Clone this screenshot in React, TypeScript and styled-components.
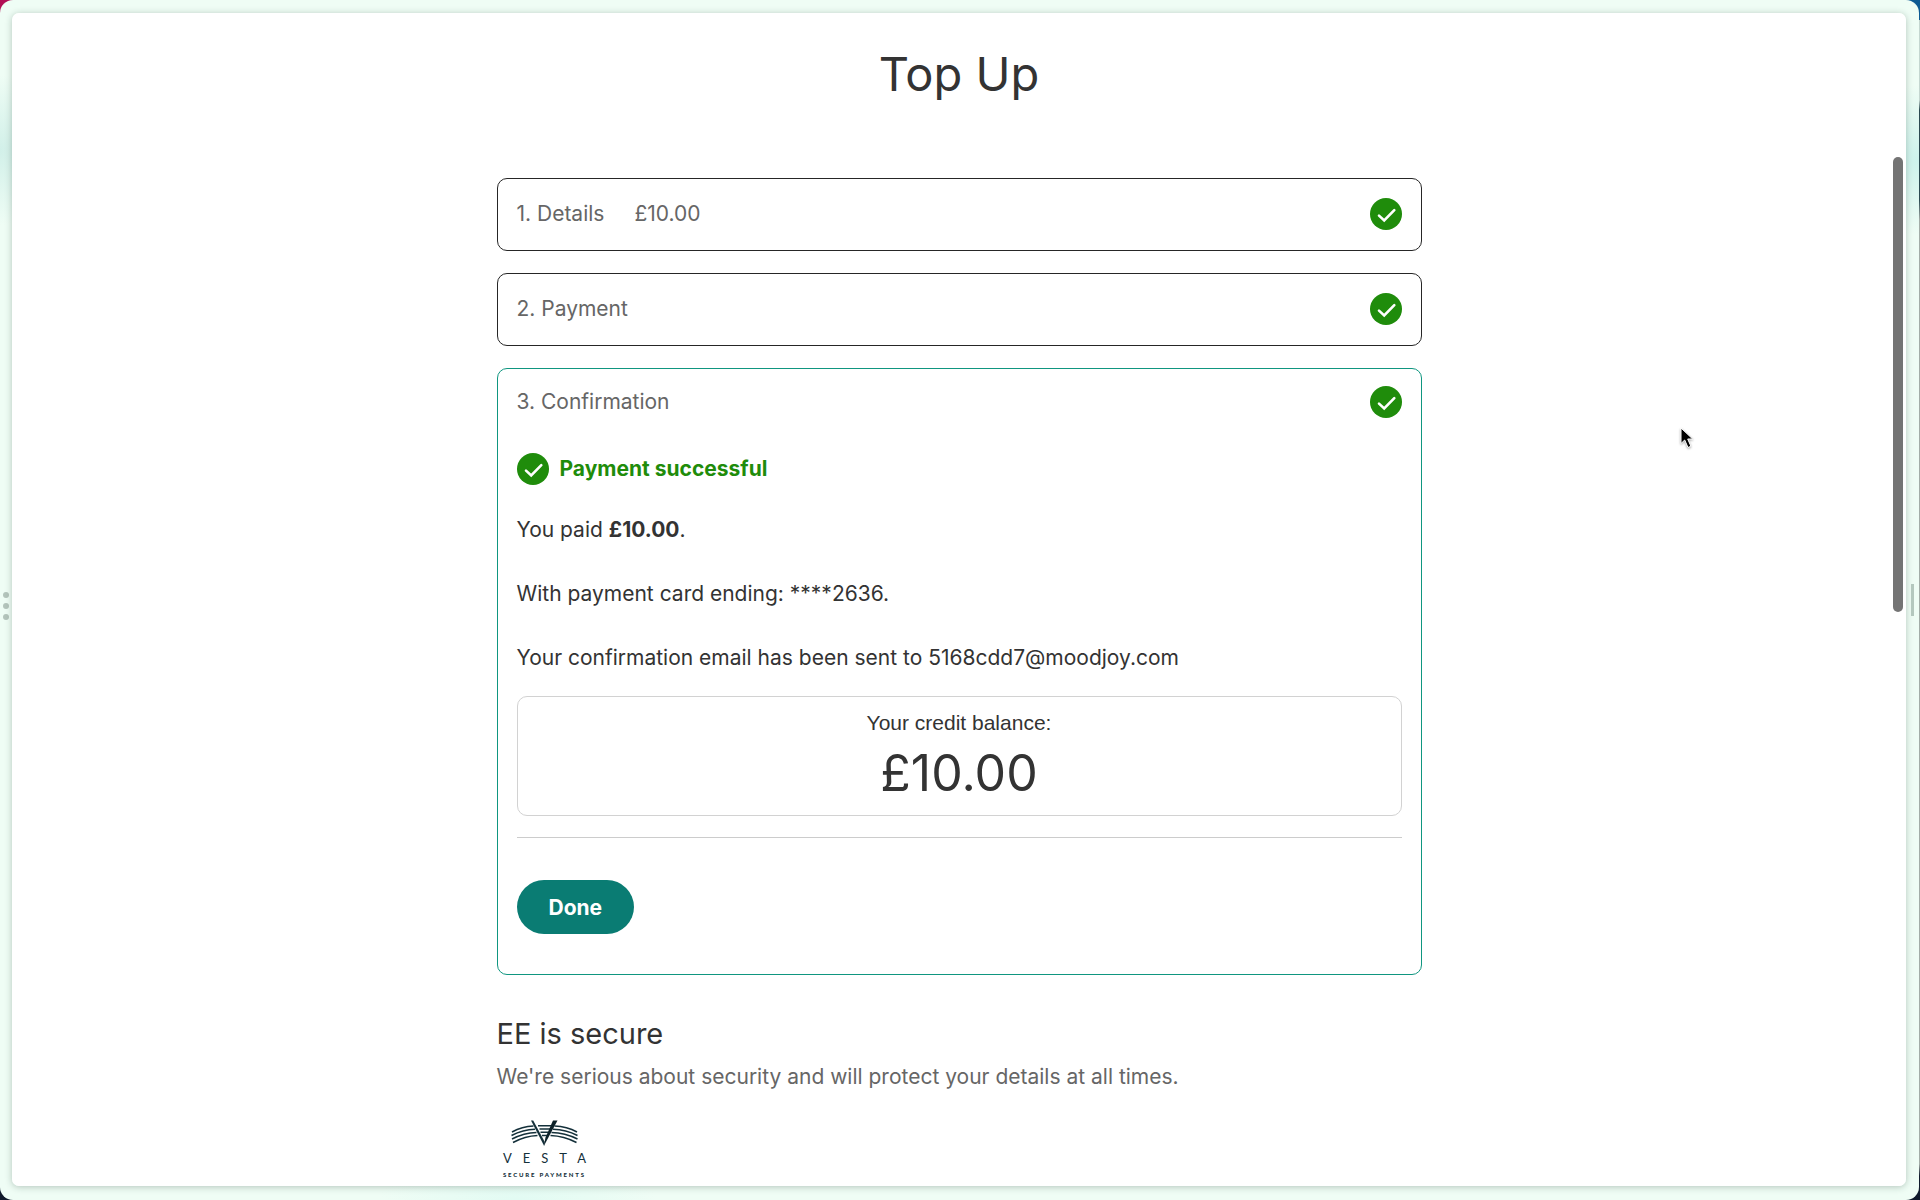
import React from 'react';
import styled, { createGlobalStyle, css } from 'styled-components';

const GlobalStyle = createGlobalStyle`
  *, *::before, *::after { box-sizing: border-box; }
  body { margin: 0; overflow: hidden; }
  h1, h2, p { margin: 0; font-weight: 400; }
`;

const fontMain = `Inter, 'Noto Sans', sans-serif`;

const Desktop = styled.div`
  height: 100vh;
  background:
    linear-gradient(90deg, #b20f55 0 50%, #0d5a93 50% 100%) top / 100% 20px no-repeat,
    linear-gradient(180deg, #c4d6d0 100px, #2c4a52 110px, #2c4a52 200px, #a3ada8 220px, #a3ada8 97%, #101a2c 98%);
  font-family: ${fontMain};
  color: #333;
`;

const Frame = styled.div`
  position: relative;
  display: grid;
  grid-template-columns: 12px minmax(0, 1fr) 13px;
  height: 100%;
  margin-right: 1px;
  padding: 13px 0 14px;
  border-radius: 13px;
  background:
    radial-gradient(circle 75px at 0 150px, #d2f0e9, transparent) no-repeat,
    radial-gradient(circle 75px at 100% 160px, #cdf2ec, transparent) no-repeat,
    radial-gradient(ellipse 140px 40px at 27% 100%, #e2fbf3, transparent) no-repeat,
    #effdf5;
`;

const Grip = styled.div`
  display: flex;
  flex-direction: column;
  align-items: center;
  justify-content: center;
  gap: 5px;
`;

const DotGrip = styled(Grip)`
  padding-top: 12px;
`;

const GripDot = styled.span`
  width: 6px;
  height: 6px;
  border-radius: 50%;
  background: #b4c5bc;
`;

const GripBar = styled.span`
  width: 3px;
  height: 32px;
  background: #b4c8be;
`;

const Sheet = styled.main`
  position: relative;
  overflow: hidden;
  border-radius: 7px;
  background: #fff;
`;

const SheetShadow = styled.div`
  display: grid;
  min-height: 0;
  border-radius: 7px;
  box-shadow: 0 1px 7px rgba(20, 50, 40, 0.28);
`;

const Content = styled.div`
  max-width: 925px;
  margin: 0 auto;
  padding-top: 31px;
`;

const Title = styled.h1`
  margin-bottom: 74px;
  font-size: 47px;
  line-height: 60px;
  text-align: center;
`;

const Steps = styled.div`
  display: flex;
  flex-direction: column;
  gap: 22px;
`;

const Card = styled.section<{ $active?: boolean }>`
  padding: 19px 19px 20px;
  border: 1px solid #262626;
  border-radius: 10px;
  ${({ $active }) =>
    $active &&
    css`
      padding: 17px 19px 40px;
      border-color: #0f9680;
    `}
`;

const StepHeader = styled.div`
  display: flex;
  align-items: center;
  gap: 30px;
  color: #666;
  font-size: 21px;
  line-height: 32px;

  > svg {
    margin-left: auto;
  }
`;

const StepTitle = styled.h2`
  font-size: 21px;
`;

const Success = styled.p`
  display: flex;
  align-items: center;
  gap: 11px;
  margin: 35px 0 29px;
  color: #1f8c0b;
  font-size: 21px;
  font-weight: 700;
  line-height: 32px;
`;

const Messages = styled.div`
  display: flex;
  flex-direction: column;
  gap: 32px;
  margin-bottom: 22px;
  font-size: 21px;
  line-height: 32px;
`;

const Balance = styled.div`
  display: flex;
  flex-direction: column;
  align-items: center;
  gap: 7px;
  padding: 13px 20px 12px;
  border: 1px solid #d2d2d2;
  border-radius: 10px;
`;

const BalanceLabel = styled.p`
  font-family: 'Liberation Sans', Arial, sans-serif;
  font-size: 21px;
  line-height: 26px;
`;

const BalanceAmount = styled.p`
  font-size: 50px;
  line-height: 60px;
`;

const Divider = styled.hr`
  margin: 21px 0 42px;
  border: 0;
  border-top: 1px solid #ccc;
`;

const DoneButton = styled.button`
  display: block;
  height: 54px;
  padding: 0 32px;
  border: 0;
  border-radius: 27px;
  background: #0a7c73;
  color: #fff;
  font-family: ${fontMain};
  font-size: 21px;
  font-weight: 700;
  cursor: pointer;
`;

const Secure = styled.section`
  display: flex;
  flex-direction: column;
  gap: 7px;
  margin-top: 39px;
`;

const SecureTitle = styled.h2`
  font-size: 29px;
  line-height: 40px;
`;

const SecureText = styled.p`
  color: #666;
  font-size: 21px;
  line-height: 32px;
`;

const Logo = styled.svg`
  display: block;
  width: 108px;
  height: 64px;
  margin-top: 17px;
`;

const ScrollThumb = styled.div`
  position: absolute;
  top: 144px;
  right: 3px;
  width: 10px;
  height: 455px;
  border-radius: 5px;
  background: #747474;
`;

const Pointer = styled.svg`
  position: absolute;
  top: 426px;
  left: 1679px;
  width: 16px;
  height: 24px;
  filter: drop-shadow(0 1px 1px rgba(0, 0, 0, 0.35));
`;

function CheckIcon() {
  return (
    <svg width="32" height="32" viewBox="0 0 32 32" aria-hidden="true">
      <circle cx="16" cy="16" r="16" fill="#1f8c0b" />
      <path d="M9 17.600l5.200 4.900L24.300 12.200" fill="none" stroke="#fff" strokeWidth="2.6" strokeLinecap="round" />
    </svg>
  );
}

function VestaLogo() {
  return (
    <Logo viewBox="0 0 108 64" role="img" aria-label="Vesta Secure Payments">
      <g fill="none" stroke="#14303a" strokeWidth="1.5">
        <path d="M15 15Q25 9.500 36.500 9M14.500 18.500Q26 12.500 38 12.200M15 22Q27 15.800 39.500 15.500M16 25.500Q28 19 40.500 18.500" />
        <path d="M57.500 9Q70 9.500 80 15M56 12.200Q69 12.500 80.500 18.500M54.500 15.500Q68 15.800 80.500 22M53.500 18.500Q67 19 79.500 25.500" />
        <path d="M41 8.700H54M42.500 12H53M43.500 15.300H51.500M45 18.500H50" />
      </g>
      <path d="M34 3.500h2.200L47.800 25l-.6 4z" fill="#14303a" />
      <path d="M46.800 29l1.700-8.500 7.500-17h4.500z" fill="#0b2028" />
      <g fill="#14303a">
        <text x="6" y="46" fontFamily="Lato, sans-serif" fontSize="13" letterSpacing="11">VESTA</text>
        <text x="6" y="60" fontFamily="Lato, sans-serif" fontSize="6" fontWeight="900" letterSpacing="1.800">SECURE PAYMENTS</text>
      </g>
    </Logo>
  );
}

export default function App() {
  return (
    <Desktop>
      <GlobalStyle />
      <Frame>
        <DotGrip>
          <GripDot />
          <GripDot />
          <GripDot />
        </DotGrip>
        <SheetShadow>
          <Sheet>
            <Content>
              <Title>Top Up</Title>
              <Steps>
                <Card>
                  <StepHeader>
                    <StepTitle>1. Details</StepTitle>
                    <span>£10.00</span>
                    <CheckIcon />
                  </StepHeader>
                </Card>
                <Card>
                  <StepHeader>
                    <StepTitle>2. Payment</StepTitle>
                    <CheckIcon />
                  </StepHeader>
                </Card>
                <Card $active>
                  <StepHeader>
                    <StepTitle>3. Confirmation</StepTitle>
                    <CheckIcon />
                  </StepHeader>
                  <Success>
                    <CheckIcon />
                    Payment successful
                  </Success>
                  <Messages>
                    <p>
                      You paid <strong>£10.00</strong>.
                    </p>
                    <p>With payment card ending: ****2636.</p>
                    <p>Your confirmation email has been sent to 5168cdd7@moodjoy.com</p>
                  </Messages>
                  <Balance>
                    <BalanceLabel>Your credit balance:</BalanceLabel>
                    <BalanceAmount>£10.00</BalanceAmount>
                  </Balance>
                  <Divider />
                  <DoneButton type="button">Done</DoneButton>
                </Card>
              </Steps>
              <Secure>
                <SecureTitle>EE is secure</SecureTitle>
                <SecureText>We're serious about security and will protect your details at all times.</SecureText>
                <VestaLogo />
              </Secure>
            </Content>
            <ScrollThumb />
          </Sheet>
        </SheetShadow>
        <Grip>
          <GripBar />
        </Grip>
        <Pointer viewBox="0 0 16 24" aria-hidden="true">
          <path d="M2 2v15.500l3.700-3.500 3.300 7.500 2.900-1.300-3.200-7.200h5z" fill="#000" stroke="#fff" strokeWidth="1" />
        </Pointer>
      </Frame>
    </Desktop>
  );
}
